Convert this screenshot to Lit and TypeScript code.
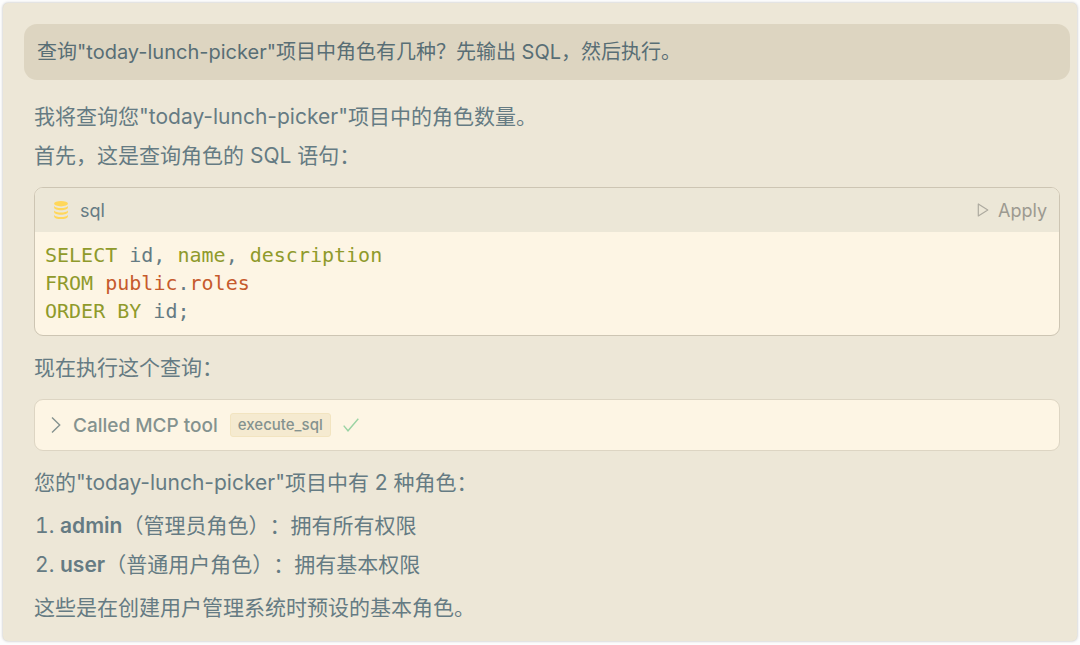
import { LitElement, html, css, svg } from "lit";
import { customElement, property } from "lit/decorators.js";

const databaseIcon = svg`
  <ellipse cx="7" cy="2.7" rx="6.9" ry="2.7"/>
  <path d="M.1 5c1 1.500 3.700 2 6.900 2s5.900-.5 6.900-2v1.600C13.900 8.300 10.800 9.300 7 9.300S.1 8.300.1 6.600z"/>
  <path d="M.1 9.400c1 1.500 3.700 2 6.900 2s5.900-.5 6.900-2V11c0 1.700-3.100 2.700-6.900 2.700S.1 12.700.1 11z"/>
  <path d="M.1 13.900c1 1.500 3.700 2 6.900 2s5.900-.5 6.900-2v1.500c0 1.700-3.100 2.600-6.900 2.600S.1 17.100.1 15.400z"/>`;

@customElement("sql-block")
class SqlBlock extends LitElement {
  static styles = css`
    :host {
      display: block;
      border: 1px solid #cdc5b3;
      border-radius: 9px;
      overflow: hidden;
      background: #fdf5e4;
    }
    .bar {
      display: flex;
      align-items: center;
      justify-content: space-between;
      height: 44px;
      padding: 0 12px 0 19px;
      background: #ece7d7;
    }
    .lang {
      display: flex;
      align-items: center;
      gap: 12px;
      font-size: 18px;
      color: #657b83;
    }
    .apply {
      display: flex;
      align-items: center;
      gap: 9px;
      padding: 0;
      border: 0;
      background: none;
      font: inherit;
      font-size: 18px;
      color: #9c9a91;
      cursor: pointer;
    }
    svg {
      display: block;
    }
    .db {
      fill: #ffd75a;
    }
    .play {
      fill: none;
      stroke: #aeaba0;
    }
    pre {
      margin: 0;
      padding: 9px 10px 10px;
      font: 20px/28px "DejaVu Sans Mono", monospace;
      color: #657b83;
    }
    .kw {
      color: #8f9a2b;
    }
    .obj {
      color: #c65a2c;
    }
  `;

  render() {
    return html`
      <div class="bar">
        <div class="lang">
          <svg class="db" width="14" height="18" viewBox="0 0 14 18">${databaseIcon}</svg>
          <span>sql</span>
        </div>
        <button class="apply" type="button">
          <svg class="play" width="12" height="14" viewBox="0 0 12 14"><path d="M1.300 1v12L10.800 7z" stroke-width="1.200" stroke-linejoin="round"/></svg>
          <span>Apply</span>
        </button>
      </div>
      <pre><code><span class="kw">SELECT</span> id, <span class="kw">name</span>, <span class="kw">description</span>
<span class="kw">FROM</span> <span class="obj">public</span>.<span class="obj">roles</span>
<span class="kw">ORDER BY</span> id;</code></pre>
    `;
  }
}

@customElement("tool-call")
class ToolCall extends LitElement {
  @property() tool = "";

  static styles = css`
    :host {
      display: block;
      border: 1px solid #ddd5c3;
      border-radius: 9px;
      background: #fdf5e4;
    }
    .row {
      display: flex;
      align-items: center;
      width: 100%;
      height: 50px;
      padding: 0 16px;
      border: 0;
      background: none;
      font: inherit;
      font-size: 19px;
      font-weight: 500;
      color: #84928f;
      text-align: left;
      cursor: pointer;
    }
    svg {
      display: block;
      flex: none;
      fill: none;
    }
    .chevron {
      margin-right: 12px;
      stroke: #84928f;
    }
    .name {
      margin: 0 12px;
      padding: 0 7px;
      border: 1px solid #f2e4c0;
      border-radius: 3px;
      background: #f5ead0;
      font-size: 15px;
      line-height: 22px;
    }
    .check {
      stroke: #9bd3a4;
    }
  `;

  render() {
    return html`
      <button class="row" type="button" aria-expanded="false">
        <svg class="chevron" width="10" height="18" viewBox="0 0 10 18"><path d="M1 1.500 8.700 9 1 16.500" stroke-width="1.400"/></svg>
        <span>Called MCP tool</span>
        <span class="name">${this.tool}</span>
        <svg class="check" width="16" height="14" viewBox="0 0 16 14"><path d="M.7 7.600 5 12.800 15.300.8" stroke-width="1.400"/></svg>
      </button>
    `;
  }
}

@customElement("app-root")
class AppRoot extends LitElement {
  private roles = [
    { name: "admin", text: "（管理员角色）：拥有所有权限" },
    { name: "user", text: "（普通用户角色）：拥有基本权限" },
  ];

  static styles = css`
    :host {
      display: block;
      box-sizing: border-box;
      min-height: 100vh;
      padding: 3px;
      background: #fdfdfd;
      font-family: Inter, "Noto Sans CJK SC", sans-serif;
      color: #657b83;
      text-spacing-trim: space-all;
    }
    .panel {
      box-sizing: border-box;
      padding: 21px 7px 14px 21px;
      border-radius: 5px;
      background: #ede7d7;
      box-shadow: 0 0 3px rgba(0, 0, 0, 0.28);
    }
    .prompt {
      padding: 0 13px;
      border-radius: 13px;
      background: #ddd5c1;
      font-size: 20px;
      line-height: 56px;
      color: #586e75;
    }
    .answer {
      display: flex;
      flex-direction: column;
      gap: 12px;
      padding: 17px 10px 0;
      font-size: 21px;
      line-height: 39px;
    }
    p,
    ol {
      margin: 0;
    }
    .closing {
      display: flex;
      flex-direction: column;
      gap: 4px;
    }
    ol {
      padding-left: 26px;
    }
    strong {
      font-weight: 600;
    }
  `;

  render() {
    return html`
      <main class="panel" lang="zh-CN">
        <div class="prompt">查询"today-lunch-picker"项目中角色有几种？先输出 SQL，然后执行。</div>
        <div class="answer">
          <p>我将查询您"today-lunch-picker"项目中的角色数量。<br />首先，这是查询角色的 SQL 语句：</p>
          <sql-block></sql-block>
          <p>现在执行这个查询：</p>
          <tool-call tool="execute_sql"></tool-call>
          <div class="closing">
            <p>您的"today-lunch-picker"项目中有 2 种角色：</p>
            <ol>
              ${this.roles.map((r) => html`<li><strong>${r.name}</strong>${r.text}</li>`)}
            </ol>
            <p>这些是在创建用户管理系统时预设的基本角色。</p>
          </div>
        </div>
      </main>
    `;
  }
}
